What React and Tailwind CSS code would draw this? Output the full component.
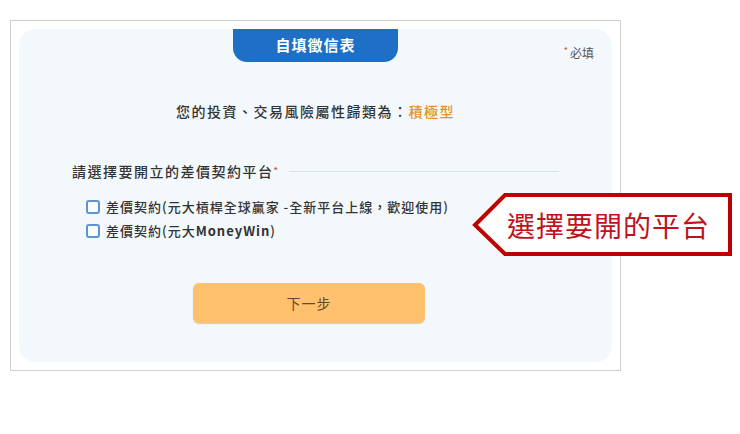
export default function App() {
  return (
    <div
      className="relative h-[434px] w-[740px] overflow-hidden bg-white"
      style={{ fontFamily: '"Noto Sans CJK TC", "Noto Sans", sans-serif' }}
    >
      <div className="ml-[10px] mt-[20px] h-[351px] w-[611px] border border-[#cfcfcf] p-2">
        <div className="flex h-full flex-col rounded-2xl bg-[#f3f8fd]">
          <div className="grid grid-cols-[1fr_165px_1fr]">
            <div />
            <div className="flex h-[33px] items-center justify-center rounded-b-[14px] bg-[#1f6fc6] text-[15px] font-bold tracking-[1px] text-white">
              自填徵信表
            </div>
            <div className="flex justify-end gap-[2px] pr-[18px] pt-[16px] text-[12px] leading-4 text-[#555]">
              <span className="text-[9px] leading-3 text-[#e53935]">*</span>
              必填
            </div>
          </div>

          <div className="mt-[39px] text-center text-[14px] font-medium leading-5 tracking-[1.5px] text-[#333]">
            您的投資、交易風險屬性歸類為：<span className="text-[#e4922e]">積極型</span>
          </div>

          <div className="mt-[40px] px-[53px]">
            <div className="flex items-center gap-[10px]">
              <div className="shrink-0 text-[14px] font-medium leading-5 tracking-[1.5px] text-[#333]">
                請選擇要開立的差價契約平台<span className="align-top text-[9px] text-[#e53935]">*</span>
              </div>
              <div className="h-px flex-1 bg-[#dde3ea]" />
            </div>

            <div className="mt-[14px] flex flex-col pl-[14px]">
              <label className="flex h-6 items-center gap-[6px] text-[13px] font-medium tracking-[1px] text-[#333]">
                <span className="h-[14px] w-[14px] shrink-0 rounded-[3px] border-2 border-[#5b95d9] bg-white" />
                差價契約(元大槓桿全球贏家 -全新平台上線，歡迎使用)
              </label>
              <label className="flex h-6 items-center gap-[6px] text-[13px] font-medium tracking-[1px] text-[#333]">
                <span className="h-[14px] w-[14px] shrink-0 rounded-[3px] border-2 border-[#5b95d9] bg-white" />
                <span>
                  差價契約(元大<span className="font-bold">MoneyWin</span>)
                </span>
              </label>
            </div>
          </div>

          <button
            type="button"
            className="ml-[174px] mt-[40px] flex h-[40px] w-[232px] items-center justify-center rounded-[6px] bg-[#ffc16b] text-[14px] tracking-[1px] text-[#5c4a32] shadow-[0_1px_1px_rgba(180,120,40,0.35)]"
          >
            下一步
          </button>
        </div>
      </div>

      <div className="absolute left-[471px] top-[191px] flex h-[67px] w-[263px] items-center">
        <svg className="absolute inset-0" width="263" height="67" viewBox="0 0 263 67">
          <polygon
            points="4,34 34,4 259,4 259,63 34,63"
            fill="#ffffff"
            stroke="#c00000"
            strokeWidth="4"
            strokeLinejoin="miter"
          />
        </svg>
        <span className="relative pl-[36px] text-[28px] leading-none tracking-[1px] text-[#c0121b]">
          選擇要開的平台
        </span>
      </div>
    </div>
  );
}
